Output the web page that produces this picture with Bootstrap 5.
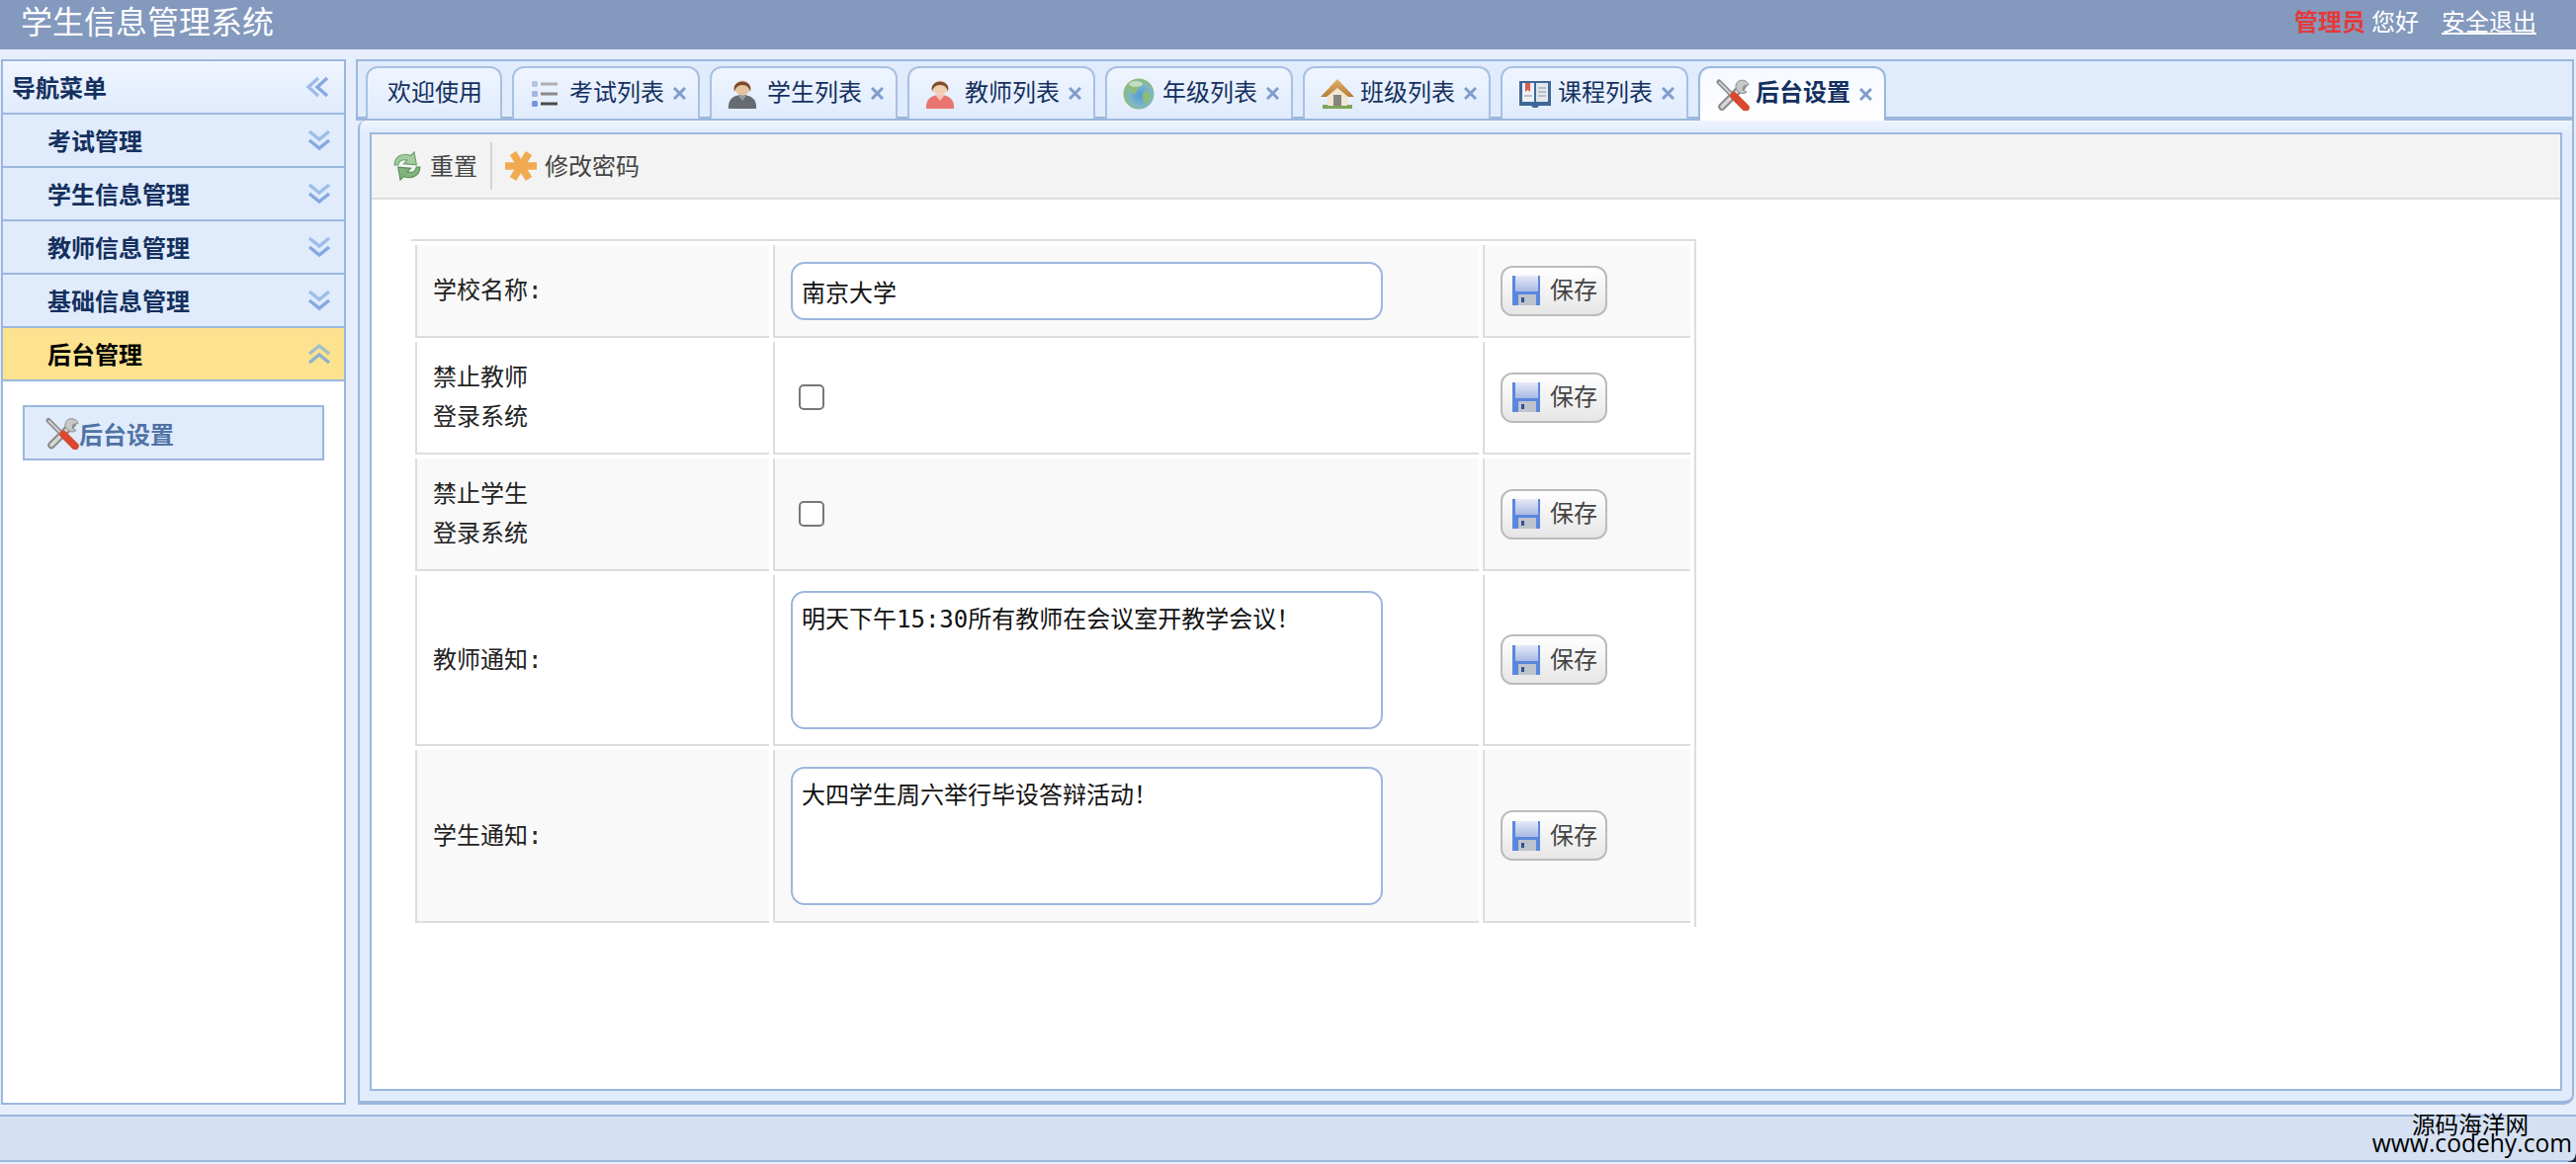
<!DOCTYPE html>
<html lang="zh-CN">
<head>
<meta charset="utf-8">
<title>学生信息管理系统</title>
<link href="https://cdn.jsdelivr.net/npm/bootstrap@5.3.0/dist/css/bootstrap.min.css" rel="stylesheet">
<style>
:root{--line:#9cb7dd;--pale:#e0ebfc;--ink:#14305f;--cjk:"Noto Sans CJK SC",sans-serif;--mono:"DejaVu Sans Mono","Noto Sans CJK SC",monospace}
html,body{height:1178px;overflow:hidden}
body{background:#e6eefb;font:24px/1.2 var(--cjk);color:#222}
.topbar{height:50px;flex:none;background:#8399bd;color:#fff;padding:0 40px 0 21px}
.app-title{font-size:32px;line-height:40px}
.top-user{line-height:42px;margin-bottom:8px}
.admin-name{color:#e23b3b;font-weight:700;margin-right:6px}
.logout{color:#fff;margin-left:23px}
.work{height:1058px;flex:none;margin:10px 2px 0 1px;gap:10px}
.sidenav{width:349px;flex:none;border:2px solid var(--line);background:#fff}
.nav-head{height:54px;padding:0 15px 0 9px;background:linear-gradient(#eff5ff,#e0ebfc);border-bottom:2px solid var(--line);color:var(--ink);font-weight:700}
.acc-row{height:54px;padding:0 13px 0 45px;background:var(--pale);border-bottom:2px solid var(--line);color:var(--ink);font-weight:700}
.acc-row.open{background:#fde28f;color:#000}
.sub-link{margin:24px 20px 0;height:56px;padding-left:21px;background:var(--pale);border:2px solid var(--line);color:#5073a5;font-weight:700;text-decoration:none}
.sub-link svg{width:34px;height:33px;flex:none}
.sub-link span{padding-top:2px}
.chev{width:24px;height:22px;flex:none;fill:none;stroke-width:3.4}
.mainbox{min-width:0}
.tabstrip{height:62px;flex:none;background:var(--pale);border:2px solid var(--line);border-bottom-width:4px;padding:5px 0 0 8px;gap:10px;flex-wrap:nowrap}
.tabstrip .nav-link{width:190px;height:53px;padding:0 0 0 16px;display:flex;align-items:center;color:var(--ink);background:linear-gradient(#eff5ff,#e0ebfc);border:2px solid #a8c0e2;border-bottom:0;border-radius:12px 12px 0 0}
.tabstrip .nav-link.plain{width:138px;padding-left:20px}
.tabstrip .nav-link.active{background:linear-gradient(#f5f9ff,#fff);font-weight:700;height:55px;position:relative;border-color:var(--line)}
.tabstrip .nav-link.active .tab-txt{padding-bottom:7px}
.tab-txt{padding-bottom:5px}
.tab-ico{width:40px;flex:none;display:flex;align-items:center}
.tab-ico svg{height:32px;width:34px;display:block}
.tab-x{width:13px;height:13px;margin-left:9px;flex:none;stroke:#7f9dcc;stroke-width:3}
.tabbody{flex:1;min-height:0;margin-left:2px;padding:12px 10px 10px 10px;background:linear-gradient(#eff5ff 0,#e0ebfc 14px);border:solid var(--line);border-width:0 2px 4px 2px;border-radius:8px 0 10px 0}
.inner{height:100%;border:2px solid var(--line);background:#fff}
.toolbar{height:66px;flex:none;background:#f3f3f3;border-bottom:2px solid #ddd;padding-left:22px}
.tool-btn{display:flex;align-items:center;color:#444;text-decoration:none}
.tool-btn span{padding-bottom:2px}
.tool-btn svg{height:32px;flex:none}
.tool-gap{margin-right:9px}
.tool-sep{width:2px;height:48px;background:#d4d4d4;margin:0 13px}
.settings{width:1300px;table-layout:fixed;margin:40px 0 0 40px;border-collapse:separate;border-spacing:4px;border-top:2px solid #ddd;border-right:2px solid #ddd}
.settings td{border-left:2px solid #ddd;border-bottom:2px solid #ddd;padding:0 0 0 16px;vertical-align:middle;font:24px/40px var(--mono);color:#222}
.settings tr:nth-child(odd) td{background:#f9f9f9}
.settings .form-control{width:599px;border:2px solid var(--line);border-radius:14px;font:24px/32px var(--mono);color:#111;padding:10px 9px;background:#fff;box-shadow:none}
.settings input.form-control{height:59px}
.settings textarea.form-control{height:140px;resize:none;padding:11px 9px 7px}
.settings .form-check-input{width:26px;height:26px;margin:0 0 0 8px;border:2px solid #777;border-radius:5px;display:block}
.save-btn{width:108px;height:51px;padding:0 0 0 10px;display:flex;align-items:center;gap:10px;border:2px solid #bbb;border-radius:12px;background:linear-gradient(#fff,#e6e6e6);color:#444;font:24px/1 var(--cjk)}
.save-btn svg{width:28px;height:30px;flex:none}
.save-btn span{padding-bottom:4px}
.foot{height:48px;flex:none;margin-top:10px;background:#d5e1f2;border:solid var(--line);border-width:2px 0}
.foot-corner{position:absolute;right:0;bottom:-2px;width:8px;height:8px;background:radial-gradient(circle at 0 0,transparent 7px,#1b2430 8px)}
.wmark{position:absolute;right:4px;bottom:8px;color:#000;text-align:right;line-height:1}
.wmark-cn{display:block;font-size:23.6px;line-height:22px;margin-right:44px}
.wmark-en{display:block;font:24.6px/18px "Open Sans",sans-serif}
</style>
</head>
<body class="d-flex flex-column">
<svg width="0" height="0" class="position-absolute">
<defs>
<linearGradient id="gFlop" x1="0" y1="0" x2="0" y2="1"><stop offset="0" stop-color="#e6eaf8"/><stop offset="1" stop-color="#a9b9e4"/></linearGradient>
<radialGradient id="gGlobe" cx=".55" cy=".55" r=".55"><stop offset="0" stop-color="#4f9ad6"/><stop offset=".65" stop-color="#7db7c8"/><stop offset="1" stop-color="#8fbb6e"/></radialGradient>
<linearGradient id="gRoof" x1="0" y1="0" x2="0" y2="1"><stop offset="0" stop-color="#e4b267"/><stop offset="1" stop-color="#b67a36"/></linearGradient>
<symbol id="i-list" viewBox="0 0 34 32"><rect x="2" y="3" width="6" height="6" rx="1.5" fill="#b7c4ea"/><rect x="2" y="13" width="6" height="6" rx="1.5" fill="#a3b5e6"/><rect x="2" y="23" width="6" height="6" rx="1.5" fill="#7795dc"/><rect x="11" y="4.5" width="17" height="3" fill="#b0b0b0"/><rect x="11" y="14.5" width="17" height="3" fill="#8a8a8a"/><rect x="11" y="24.5" width="17" height="3" fill="#4a4a4a"/></symbol>
<symbol id="i-stu" viewBox="0 0 34 32"><path d="M1 31C0 21 7 17 15 17s15 4 14 14z" fill="#656b70"/><path d="M10 17l5 6 5-6z" fill="#93999c"/><circle cx="15" cy="10" r="7.500" fill="#e5c39f"/><path d="M7 14C3 0 27 0 23 14c-1-4-3-7-8-7s-7 3-8 7z" fill="#7a4a2a"/></symbol>
<symbol id="i-tea" viewBox="0 0 34 32"><path d="M1 31C0 21 7 17 15 17s15 4 14 14z" fill="#e8766e"/><path d="M10 17l5 6 5-6z" fill="#f6c2bc"/><circle cx="15" cy="10" r="7.500" fill="#efcfb0"/><path d="M7 14C3 0 27 0 23 14c-1-4-3-7-8-7s-7 3-8 7z" fill="#80502e"/></symbol>
<symbol id="i-globe" viewBox="0 0 34 32"><circle cx="16" cy="16" r="15.5" fill="url(#gGlobe)"/><path d="M7 9c4-5 10-6 14-4-1 3-5 3-6 6s-3 6-5 5-3-4-3-7zM22 13c3 0 6 2 6 6-1 5-5 8-7 6 0-4-2-6-1-9z" fill="#8fc06a" opacity=".85"/><ellipse cx="13" cy="6" rx="7" ry="3" fill="#fff" opacity=".5"/></symbol>
<symbol id="i-house" viewBox="0 0 34 32"><rect x="2" y="27" width="30" height="4" fill="#7fa45a"/><path d="M17 9l10 9v10H7V18z" fill="#f1e6d2"/><rect x="13" y="17" width="8" height="11" fill="#85857f"/><path d="M17 1L0 19h6L17 10l11 9h6z" fill="url(#gRoof)"/></symbol>
<symbol id="i-book" viewBox="0 0 34 32"><path d="M1 3h32v25H21l-2 2h-4l-2-2H1z" fill="#3f6797"/><path d="M4 5h12v19H4z" fill="#eef1f4"/><path d="M18 5h12v19H18z" fill="#e2e7ec"/><path d="M7 5h5v9l-2.500-2L7 14z" fill="#dd5a4f"/><path d="M20 10h8M20 14h8M20 18h8M6 18h8" stroke="#a5b2c2" stroke-width="1.500"/></symbol>
<symbol id="i-tools" viewBox="0 0 34 32"><path d="M27 7L6 28" stroke="#8a8a8a" stroke-width="7.500" stroke-linecap="round"/><path d="M27 7L6 28" stroke="#d8d8d8" stroke-width="3.500" stroke-linecap="round"/><path d="M23 2c4-2 9 0 10 4l-5 1-1 4 4 2c-3 3-8 1-10-2s-1-7 2-9z" fill="#c8c8c8" stroke="#8a8a8a"/><path d="M3 3l15 15" stroke="#8a8a8a" stroke-width="5" stroke-linecap="round"/><path d="M3 3l15 15" stroke="#d0d0d0" stroke-width="2"/><path d="M18 17l12 12" stroke="#d9482f" stroke-width="7.500" stroke-linecap="round"/></symbol>
<symbol id="i-refresh" viewBox="3 3 24 26"><path d="M4 15C4 8 11 4 18 7l3-3 2 11-11-1 3-3c-4-1-7 0-8 4z" fill="#a3cda0" stroke="#6f9f6c"/><path d="M26 17c0 7-7 11-14 8l-3 3-2-11 11 1-3 3c4 1 7 0 8-4z" fill="#7fb57a" stroke="#5d9059"/></symbol>
<symbol id="i-star" viewBox="0 0 32 32"><g stroke="#f1aa50" stroke-width="7.500"><path d="M0 16h32"/><path d="M8 3l16 26"/><path d="M24 3L8 29"/></g></symbol>
<symbol id="i-save" viewBox="0 0 28 30"><rect width="28" height="30" fill="#5a87de"/><rect x="3" y="0" width="23" height="16" fill="url(#gFlop)"/><rect x="6" y="19" width="18" height="11" fill="#bfc3cd"/><rect x="9" y="22" width="3" height="5" fill="#33528f"/></symbol>
</defs>
</svg>

<header class="topbar d-flex justify-content-between align-items-start">
  <div class="app-title">学生信息管理系统</div>
  <div class="top-user"><span class="admin-name">管理员</span>您好<a href="#" class="logout">安全退出</a></div>
</header>

<div class="work d-flex">
  <aside class="sidenav d-flex flex-column">
    <div class="nav-head d-flex justify-content-between align-items-center"><span>导航菜单</span>
      <svg class="chev" viewBox="0 0 24 22"><path d="M13 2L3 11l10 9" stroke="#9dbdea"/><path d="M22 2l-10 9 10 9" stroke="#84a9e0"/></svg></div>
    <div class="acc-row d-flex justify-content-between align-items-center"><span>考试管理</span>
      <svg class="chev" viewBox="0 0 24 22"><path d="M2 2l10 8 10-8" stroke="#9dbdea"/><path d="M2 11l10 8 10-8" stroke="#84a9e0"/></svg></div>
    <div class="acc-row d-flex justify-content-between align-items-center"><span>学生信息管理</span>
      <svg class="chev" viewBox="0 0 24 22"><path d="M2 2l10 8 10-8" stroke="#9dbdea"/><path d="M2 11l10 8 10-8" stroke="#84a9e0"/></svg></div>
    <div class="acc-row d-flex justify-content-between align-items-center"><span>教师信息管理</span>
      <svg class="chev" viewBox="0 0 24 22"><path d="M2 2l10 8 10-8" stroke="#9dbdea"/><path d="M2 11l10 8 10-8" stroke="#84a9e0"/></svg></div>
    <div class="acc-row d-flex justify-content-between align-items-center"><span>基础信息管理</span>
      <svg class="chev" viewBox="0 0 24 22"><path d="M2 2l10 8 10-8" stroke="#9dbdea"/><path d="M2 11l10 8 10-8" stroke="#84a9e0"/></svg></div>
    <div class="acc-row open d-flex justify-content-between align-items-center"><span>后台管理</span>
      <svg class="chev" viewBox="0 0 24 22"><path d="M2 11l10-8 10 8" stroke="#a3bfc7"/><path d="M2 20l10-8 10 8" stroke="#8db2cf"/></svg></div>
    <a href="#" class="sub-link d-flex align-items-center"><svg><use href="#i-tools"/></svg><span>后台设置</span></a>
  </aside>

  <main class="mainbox flex-grow-1 d-flex flex-column">
    <ul class="nav tabstrip">
      <li class="nav-item"><a class="nav-link plain" href="#"><span class="tab-txt">欢迎使用</span></a></li>
      <li class="nav-item"><a class="nav-link" href="#"><span class="tab-ico"><svg><use href="#i-list"/></svg></span><span class="tab-txt">考试列表</span><svg class="tab-x" viewBox="0 0 13 13"><path d="M1 1l11 11M12 1L1 12"/></svg></a></li>
      <li class="nav-item"><a class="nav-link" href="#"><span class="tab-ico"><svg><use href="#i-stu"/></svg></span><span class="tab-txt">学生列表</span><svg class="tab-x" viewBox="0 0 13 13"><path d="M1 1l11 11M12 1L1 12"/></svg></a></li>
      <li class="nav-item"><a class="nav-link" href="#"><span class="tab-ico"><svg><use href="#i-tea"/></svg></span><span class="tab-txt">教师列表</span><svg class="tab-x" viewBox="0 0 13 13"><path d="M1 1l11 11M12 1L1 12"/></svg></a></li>
      <li class="nav-item"><a class="nav-link" href="#"><span class="tab-ico"><svg><use href="#i-globe"/></svg></span><span class="tab-txt">年级列表</span><svg class="tab-x" viewBox="0 0 13 13"><path d="M1 1l11 11M12 1L1 12"/></svg></a></li>
      <li class="nav-item"><a class="nav-link" href="#"><span class="tab-ico"><svg><use href="#i-house"/></svg></span><span class="tab-txt">班级列表</span><svg class="tab-x" viewBox="0 0 13 13"><path d="M1 1l11 11M12 1L1 12"/></svg></a></li>
      <li class="nav-item"><a class="nav-link" href="#"><span class="tab-ico"><svg><use href="#i-book"/></svg></span><span class="tab-txt">课程列表</span><svg class="tab-x" viewBox="0 0 13 13"><path d="M1 1l11 11M12 1L1 12"/></svg></a></li>
      <li class="nav-item"><a class="nav-link active" href="#"><span class="tab-ico"><svg><use href="#i-tools"/></svg></span><span class="tab-txt">后台设置</span><svg class="tab-x" viewBox="0 0 13 13"><path d="M1 1l11 11M12 1L1 12"/></svg></a></li>
    </ul>
    <div class="tabbody">
      <div class="inner d-flex flex-column">
        <div class="toolbar d-flex align-items-center">
          <a href="#" class="tool-btn"><svg width="28" class="tool-gap"><use href="#i-refresh"/></svg><span>重置</span></a>
          <span class="tool-sep"></span>
          <a href="#" class="tool-btn"><svg width="32" class="me-2"><use href="#i-star"/></svg><span>修改密码</span></a>
        </div>
        <table class="settings">
          <colgroup><col style="width:358px"><col style="width:714px"><col style="width:210px"></colgroup>
          <tbody>
          <tr style="height:94px"><td>学校名称:</td><td><input class="form-control" type="text" value="南京大学"></td><td><button type="button" class="btn save-btn"><svg><use href="#i-save"/></svg><span>保存</span></button></td></tr>
          <tr style="height:114px"><td>禁止教师<br>登录系统</td><td><input class="form-check-input" type="checkbox"></td><td><button type="button" class="btn save-btn"><svg><use href="#i-save"/></svg><span>保存</span></button></td></tr>
          <tr style="height:114px"><td>禁止学生<br>登录系统</td><td><input class="form-check-input" type="checkbox"></td><td><button type="button" class="btn save-btn"><svg><use href="#i-save"/></svg><span>保存</span></button></td></tr>
          <tr style="height:173px"><td>教师通知:</td><td><textarea class="form-control">明天下午15:30所有教师在会议室开教学会议！</textarea></td><td><button type="button" class="btn save-btn"><svg><use href="#i-save"/></svg><span>保存</span></button></td></tr>
          <tr style="height:175px"><td>学生通知:</td><td><textarea class="form-control">大四学生周六举行毕设答辩活动！</textarea></td><td><button type="button" class="btn save-btn"><svg><use href="#i-save"/></svg><span>保存</span></button></td></tr>
          </tbody>
        </table>
      </div>
    </div>
  </main>
</div>

<footer class="foot position-relative">
  <span class="foot-corner"></span>
  <div class="wmark"><span class="wmark-cn">源码海洋网</span><span class="wmark-en">www.codehy.com</span></div>
</footer>
<script src="https://cdn.jsdelivr.net/npm/bootstrap@5.3.0/dist/js/bootstrap.bundle.min.js"></script>
</body>
</html>
